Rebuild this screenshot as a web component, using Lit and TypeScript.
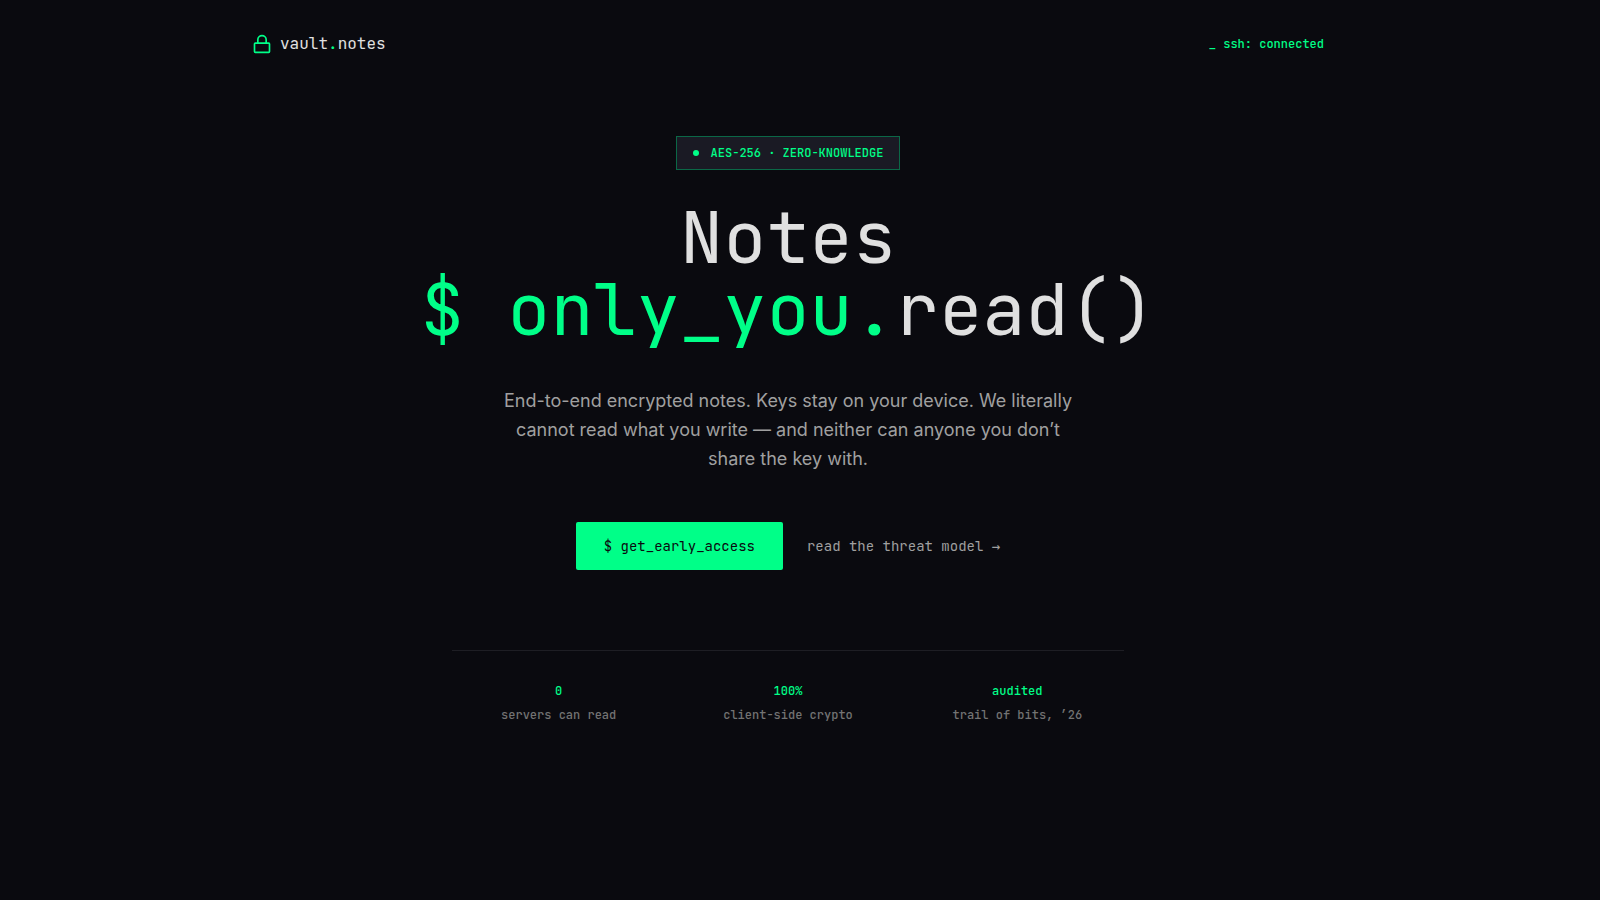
import { LitElement, html, css } from "lit";
import { customElement } from "lit/decorators.js";

interface Stat {
  value: string;
  label: string;
}

const STATS: Stat[] = [
  { value: "0", label: "servers can read" },
  { value: "100%", label: "client-side crypto" },
  { value: "audited", label: "trail of bits, ’26" },
];

@customElement("app-root")
export class AppRoot extends LitElement {
  static styles = css`
    :host {
      --bg: #0a0a0f;
      --panel: #1a1a24;
      --accent: #00ff88;
      --text: #e0e0e0;
      --mono: "JetBrains Mono", "DejaVu Sans Mono", "Liberation Mono", monospace;
      display: block;
      box-sizing: border-box;
      min-height: 100vh;
      padding-right: 24px;
      background: var(--bg);
      color: var(--text);
      font-family: var(--mono);
      font-weight: 400;
    }
    .header {
      box-sizing: border-box;
      max-width: 1120px;
      margin: 0 auto;
      padding: 32px 24px;
      display: flex;
      align-items: center;
      justify-content: space-between;
    }
    .brand {
      display: flex;
      align-items: center;
      gap: 8px;
      font-size: 16px;
      line-height: 24px;
      color: inherit;
      text-decoration: none;
    }
    .lock {
      width: 20px;
      height: 20px;
      color: var(--accent);
    }
    .accent {
      color: var(--accent);
    }
    .status {
      font-size: 12px;
      line-height: 16px;
      font-weight: 500;
      color: var(--accent);
    }
    .hero {
      display: flex;
      flex-direction: column;
      align-items: center;
      padding: 48px 24px;
      text-align: center;
    }
    .badge {
      display: inline-flex;
      align-items: center;
      gap: 12px;
      padding: 8px 16px;
      border: 1px solid #0b6847;
      background: var(--panel);
      font-size: 12px;
      line-height: 16px;
      font-weight: 500;
      color: var(--accent);
    }
    .dot {
      width: 6px;
      height: 6px;
      border-radius: 50%;
      background: var(--accent);
    }
    .title {
      margin: 32px 0 40px;
      font-size: 72px;
      line-height: 72px;
      font-weight: 400;
    }
    .lead {
      max-width: 576px;
      margin: 0 0 49px;
      font-family: Inter, "Liberation Sans", sans-serif;
      font-size: 18px;
      line-height: 29px;
      color: #a0a0a0;
    }
    .actions {
      display: flex;
      flex-wrap: wrap;
      align-items: center;
      justify-content: center;
      gap: 24px;
      font-size: 14px;
      line-height: 20px;
    }
    .cta {
      padding: 14px 28px;
      border: 0;
      border-radius: 2px;
      background: var(--accent);
      color: var(--bg);
      font: inherit;
      cursor: pointer;
    }
    .link {
      color: #a0a0a0;
      text-decoration: none;
    }
    .arrow {
      font-family: "DejaVu Sans Mono", monospace;
    }
    .stats {
      box-sizing: border-box;
      width: 100%;
      max-width: 672px;
      margin: 80px 0 0;
      padding-top: 32px;
      border-top: 1px solid #1e1e24;
      display: grid;
      grid-template-columns: repeat(3, 1fr);
      gap: 16px;
      font-size: 12px;
      line-height: 16px;
      font-weight: 500;
    }
    .stat {
      display: flex;
      flex-direction: column-reverse;
      gap: 8px;
    }
    .value {
      margin: 0;
      color: var(--accent);
    }
    .label {
      color: #737373;
    }
  `;

  render() {
    return html`
      <header class="header">
        <a class="brand" href="#">
          <svg class="lock" viewBox="0 0 24 24" fill="none" stroke="currentColor" stroke-width="2"
            stroke-linecap="round" stroke-linejoin="round" aria-hidden="true">
            <rect x="3" y="11" width="18" height="11" rx="1" ry="1"></rect>
            <path d="M7 11V7a5 5 0 0 1 10 0v4"></path>
          </svg>
          <span>vault<span class="accent">.</span>notes</span>
        </a>
        <span class="status">_ ssh: connected</span>
      </header>
      <main class="hero">
        <div class="badge"><span class="dot"></span>AES-256 · ZERO-KNOWLEDGE</div>
        <h1 class="title">Notes<br /><span class="accent">$ only_you.</span>read()</h1>
        <p class="lead">
          End-to-end encrypted notes. Keys stay on your device. We literally cannot read what you
          write — and neither can anyone you don’t share the key with.
        </p>
        <div class="actions">
          <button class="cta" type="button">$ get_early_access</button>
          <a class="link" href="#threat-model">read the threat model <span class="arrow">→</span></a>
        </div>
        <dl class="stats">
          ${STATS.map(
            (s) => html`<div class="stat">
              <dt class="label">${s.label}</dt>
              <dd class="value">${s.value}</dd>
            </div>`
          )}
        </dl>
      </main>
    `;
  }
}
